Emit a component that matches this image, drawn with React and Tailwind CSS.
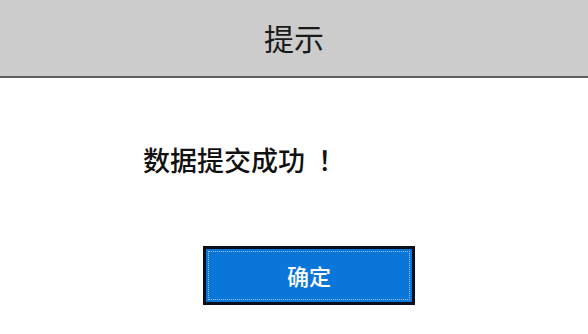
export default function App() {
  return (
    <div
      className="w-[588px] h-[334px] bg-white overflow-hidden"
      style={{ fontFamily: '"Microsoft YaHei", "Noto Sans CJK SC", sans-serif' }}
    >
      {/* Header */}
      <div className="h-[78px] bg-[#cccccc] border-b-2 border-[#5f5f5f] flex items-center justify-center">
        <h1 className="text-[30px] leading-none text-[#1a1a1a] pb-[2px]">提示</h1>
      </div>

      {/* Message */}
      <p className="mt-[68px] pl-[143px] text-[27px] leading-[27px] text-[#111] font-medium">
        数据提交成功<span className="ml-[13px]">！</span>
      </p>

      {/* Button */}
      <button className="mt-[73px] ml-[203px] w-[212px] h-[59px] bg-[#0a76d8] border-[3px] border-[#0b0f1c] text-white text-[22px] font-medium outline-1 outline-dotted outline-[#9cc6ee] outline-offset-[-6px] flex items-center justify-center">
        确定
      </button>
    </div>
  );
}
